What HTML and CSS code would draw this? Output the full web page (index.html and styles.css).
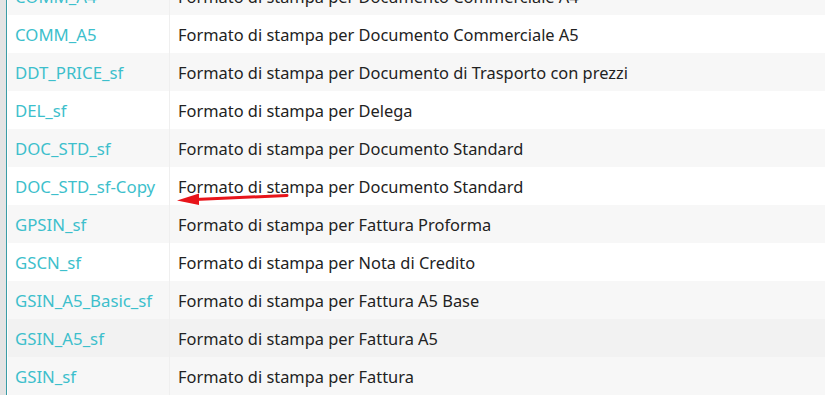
FILE: index.html
```html
<!DOCTYPE html>
<html>
<head>
<meta charset="utf-8">
<link rel="stylesheet" href="styles.css">
</head>
<body>
<div class="frame">
  <div class="gutter"></div>
  <div class="edge"></div>
  <div class="viewport">
    <table class="grid">
      <tr class="odd"><td class="code">COMM_A4</td><td class="desc">Formato di stampa per Documento Commerciale A4</td></tr>
      <tr><td class="code">COMM_A5</td><td class="desc">Formato di stampa per Documento Commerciale A5</td></tr>
      <tr class="odd"><td class="code">DDT_PRICE_sf</td><td class="desc">Formato di stampa per Documento di Trasporto con prezzi</td></tr>
      <tr><td class="code">DEL_sf</td><td class="desc">Formato di stampa per Delega</td></tr>
      <tr class="odd"><td class="code">DOC_STD_sf</td><td class="desc">Formato di stampa per Documento Standard</td></tr>
      <tr><td class="code">DOC_STD_sf-Copy</td><td class="desc arrow-cell">Formato di stampa per Documento Standard<svg class="arrow" width="120" height="16" viewBox="0 0 120 16"><line x1="18" y1="9.5" x2="110" y2="5.5" stroke="#e8141a" stroke-width="3" stroke-linecap="round"/><polygon points="0,10.5 22,3.5 22,15" fill="#e8141a"/></svg></td></tr>
      <tr class="odd"><td class="code">GPSIN_sf</td><td class="desc">Formato di stampa per Fattura Proforma</td></tr>
      <tr><td class="code">GSCN_sf</td><td class="desc">Formato di stampa per Nota di Credito</td></tr>
      <tr class="odd"><td class="code">GSIN_A5_Basic_sf</td><td class="desc">Formato di stampa per Fattura A5 Base</td></tr>
      <tr class="hover"><td class="code">GSIN_A5_sf</td><td class="desc">Formato di stampa per Fattura A5</td></tr>
      <tr class="odd"><td class="code">GSIN_sf</td><td class="desc">Formato di stampa per Fattura</td></tr>
    </table>
  </div>
</div>
</body>
</html>
```
FILE: styles.css
```css
html, body {
  margin: 0;
  padding: 0;
  background: #ffffff;
}
.frame {
  display: flex;
  width: 825px;
  height: 395px;
  overflow: hidden;
}
.gutter {
  width: 6px;
  background: #e4e4e4;
  flex: none;
}
.edge {
  width: 1px;
  background: #3a9ca6;
  flex: none;
}
.viewport {
  flex: 1;
  margin-left: 1px;
  overflow: hidden;
}
.grid {
  border-collapse: collapse;
  width: 100%;
  margin-top: -23px;
  font-family: "Noto Sans", "Open Sans", sans-serif;
  font-size: 16.4px;
}
.grid tr {
  height: 38px;
  background: #ffffff;
}
.grid tr.odd {
  background: #f7f7f7;
}
.grid tr.hover {
  background: #f2f2f2;
}
.grid td {
  padding: 0 8px;
  vertical-align: middle;
  white-space: nowrap;
}
.code {
  width: 146px;
  padding-left: 7px !important;
  color: #3dbfcc;
  font-size: 16.8px;
  border-right: 1px solid #efefef;
}
.desc {
  color: #222222;
}
.arrow-cell {
  position: relative;
}
.arrow {
  position: absolute;
  left: 7px;
  top: 23px;
}
```
